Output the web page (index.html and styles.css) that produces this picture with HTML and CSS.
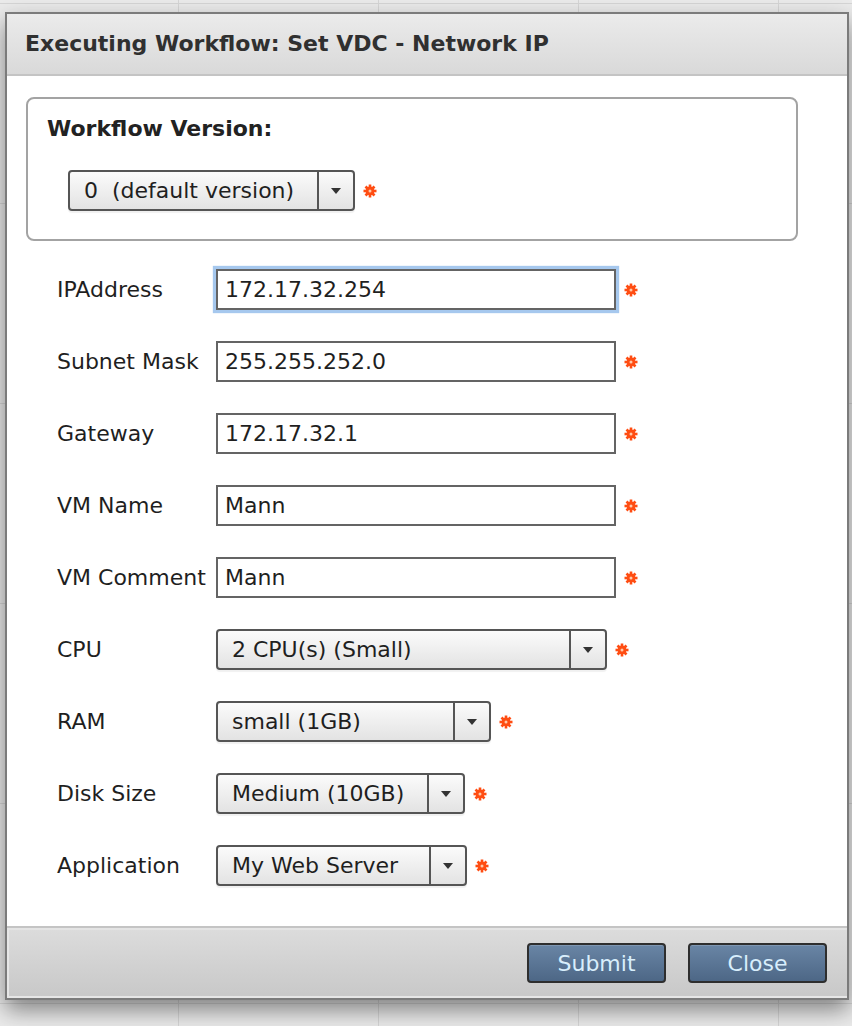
FILE: index.html
```html
<!DOCTYPE html>
<html>
<head>
<meta charset="utf-8">
<title>Executing Workflow</title>
<link rel="stylesheet" href="styles.css">
</head>
<body>
<div class="dialog">
  <div class="titlebar">Executing Workflow: Set VDC - Network IP</div>
  <div class="content">
    <div class="version-box">
      <div class="version-title">Workflow Version:</div>
      <div class="version-row">
        <div class="combo w-version"><span class="combo-text">0&nbsp; (default version)</span><span class="combo-btn"><span class="tri"></span></span></div>
        <svg class="req" viewBox="0 0 14 14"><g stroke="#ff4d12" stroke-width="2.6" stroke-linecap="butt"><line x1="7" y1="0.5" x2="7" y2="13.5"/><line x1="0.5" y1="7" x2="13.5" y2="7"/><line x1="2.5" y1="2.5" x2="11.5" y2="11.5"/><line x1="11.5" y1="2.5" x2="2.5" y2="11.5"/></g><circle cx="7" cy="7" r="4.4" fill="#ff4d12"/><circle cx="7" cy="7" r="1.5" fill="#ffc9a8"/></svg>
      </div>
    </div>
    <div class="form">
      <div class="label">IPAddress</div>
      <div class="field"><input class="text focused" type="text" value="172.17.32.254"><svg class="req" viewBox="0 0 14 14"><g stroke="#ff4d12" stroke-width="2.6" stroke-linecap="butt"><line x1="7" y1="0.5" x2="7" y2="13.5"/><line x1="0.5" y1="7" x2="13.5" y2="7"/><line x1="2.5" y1="2.5" x2="11.5" y2="11.5"/><line x1="11.5" y1="2.5" x2="2.5" y2="11.5"/></g><circle cx="7" cy="7" r="4.4" fill="#ff4d12"/><circle cx="7" cy="7" r="1.5" fill="#ffc9a8"/></svg></div>

      <div class="label">Subnet Mask</div>
      <div class="field"><input class="text" type="text" value="255.255.252.0"><svg class="req" viewBox="0 0 14 14"><g stroke="#ff4d12" stroke-width="2.6" stroke-linecap="butt"><line x1="7" y1="0.5" x2="7" y2="13.5"/><line x1="0.5" y1="7" x2="13.5" y2="7"/><line x1="2.5" y1="2.5" x2="11.5" y2="11.5"/><line x1="11.5" y1="2.5" x2="2.5" y2="11.5"/></g><circle cx="7" cy="7" r="4.4" fill="#ff4d12"/><circle cx="7" cy="7" r="1.5" fill="#ffc9a8"/></svg></div>

      <div class="label">Gateway</div>
      <div class="field"><input class="text" type="text" value="172.17.32.1"><svg class="req" viewBox="0 0 14 14"><g stroke="#ff4d12" stroke-width="2.6" stroke-linecap="butt"><line x1="7" y1="0.5" x2="7" y2="13.5"/><line x1="0.5" y1="7" x2="13.5" y2="7"/><line x1="2.5" y1="2.5" x2="11.5" y2="11.5"/><line x1="11.5" y1="2.5" x2="2.5" y2="11.5"/></g><circle cx="7" cy="7" r="4.4" fill="#ff4d12"/><circle cx="7" cy="7" r="1.5" fill="#ffc9a8"/></svg></div>

      <div class="label">VM Name</div>
      <div class="field"><input class="text" type="text" value="Mann"><svg class="req" viewBox="0 0 14 14"><g stroke="#ff4d12" stroke-width="2.6" stroke-linecap="butt"><line x1="7" y1="0.5" x2="7" y2="13.5"/><line x1="0.5" y1="7" x2="13.5" y2="7"/><line x1="2.5" y1="2.5" x2="11.5" y2="11.5"/><line x1="11.5" y1="2.5" x2="2.5" y2="11.5"/></g><circle cx="7" cy="7" r="4.4" fill="#ff4d12"/><circle cx="7" cy="7" r="1.5" fill="#ffc9a8"/></svg></div>

      <div class="label">VM Comment</div>
      <div class="field"><input class="text" type="text" value="Mann"><svg class="req" viewBox="0 0 14 14"><g stroke="#ff4d12" stroke-width="2.6" stroke-linecap="butt"><line x1="7" y1="0.5" x2="7" y2="13.5"/><line x1="0.5" y1="7" x2="13.5" y2="7"/><line x1="2.5" y1="2.5" x2="11.5" y2="11.5"/><line x1="11.5" y1="2.5" x2="2.5" y2="11.5"/></g><circle cx="7" cy="7" r="4.4" fill="#ff4d12"/><circle cx="7" cy="7" r="1.5" fill="#ffc9a8"/></svg></div>

      <div class="label">CPU</div>
      <div class="field"><div class="combo w-cpu"><span class="combo-text">2 CPU(s) (Small)</span><span class="combo-btn"><span class="tri"></span></span></div><svg class="req" viewBox="0 0 14 14"><g stroke="#ff4d12" stroke-width="2.6" stroke-linecap="butt"><line x1="7" y1="0.5" x2="7" y2="13.5"/><line x1="0.5" y1="7" x2="13.5" y2="7"/><line x1="2.5" y1="2.5" x2="11.5" y2="11.5"/><line x1="11.5" y1="2.5" x2="2.5" y2="11.5"/></g><circle cx="7" cy="7" r="4.4" fill="#ff4d12"/><circle cx="7" cy="7" r="1.5" fill="#ffc9a8"/></svg></div>

      <div class="label">RAM</div>
      <div class="field"><div class="combo w-ram"><span class="combo-text">small (1GB)</span><span class="combo-btn"><span class="tri"></span></span></div><svg class="req" viewBox="0 0 14 14"><g stroke="#ff4d12" stroke-width="2.6" stroke-linecap="butt"><line x1="7" y1="0.5" x2="7" y2="13.5"/><line x1="0.5" y1="7" x2="13.5" y2="7"/><line x1="2.5" y1="2.5" x2="11.5" y2="11.5"/><line x1="11.5" y1="2.5" x2="2.5" y2="11.5"/></g><circle cx="7" cy="7" r="4.4" fill="#ff4d12"/><circle cx="7" cy="7" r="1.5" fill="#ffc9a8"/></svg></div>

      <div class="label">Disk Size</div>
      <div class="field"><div class="combo w-disk"><span class="combo-text">Medium (10GB)</span><span class="combo-btn"><span class="tri"></span></span></div><svg class="req" viewBox="0 0 14 14"><g stroke="#ff4d12" stroke-width="2.6" stroke-linecap="butt"><line x1="7" y1="0.5" x2="7" y2="13.5"/><line x1="0.5" y1="7" x2="13.5" y2="7"/><line x1="2.5" y1="2.5" x2="11.5" y2="11.5"/><line x1="11.5" y1="2.5" x2="2.5" y2="11.5"/></g><circle cx="7" cy="7" r="4.4" fill="#ff4d12"/><circle cx="7" cy="7" r="1.5" fill="#ffc9a8"/></svg></div>

      <div class="label">Application</div>
      <div class="field"><div class="combo w-app"><span class="combo-text">My Web Server</span><span class="combo-btn"><span class="tri"></span></span></div><svg class="req" viewBox="0 0 14 14"><g stroke="#ff4d12" stroke-width="2.6" stroke-linecap="butt"><line x1="7" y1="0.5" x2="7" y2="13.5"/><line x1="0.5" y1="7" x2="13.5" y2="7"/><line x1="2.5" y1="2.5" x2="11.5" y2="11.5"/><line x1="11.5" y1="2.5" x2="2.5" y2="11.5"/></g><circle cx="7" cy="7" r="4.4" fill="#ff4d12"/><circle cx="7" cy="7" r="1.5" fill="#ffc9a8"/></svg></div>
    </div>
  </div>
  <div class="footer">
    <button class="btn" type="button">Submit</button>
    <button class="btn" type="button">Close</button>
  </div>
</div>
</body>
</html>
```

FILE: styles.css
```css
html, body {
  margin: 0;
  padding: 0;
}
body {
  width: 852px;
  height: 1026px;
  overflow: hidden;
  background-color: #ebebeb;
  background-image:
    linear-gradient(90deg, #d6d6d6 1px, transparent 1px),
    linear-gradient(180deg, #d6d6d6 1px, transparent 1px);
  background-size: 200px 200px, 200px 200px;
  background-position: 178px 0, 0 3px;
  font-family: "DejaVu Sans", Verdana, sans-serif;
  font-size: 22px;
  color: #222;
}
.dialog {
  box-sizing: border-box;
  width: 844px;
  margin: 12px 0 0 5px;
  border: 2px solid #7b7b7b;
  background: #fff;
  box-shadow: 0 10px 22px rgba(0, 0, 0, 0.45);
}
.titlebar {
  height: 60px;
  line-height: 60px;
  padding-left: 18px;
  font-weight: bold;
  font-size: 22px;
  color: #303030;
  background: linear-gradient(#ebebeb, #d9d9d9);
  border-bottom: 2px solid #c4c4c4;
}
.content {
  padding: 21px 49px 40px 19px;
  background: #fff;
}
.version-box {
  box-sizing: border-box;
  height: 144px;
  border: 2px solid #a3a3a3;
  border-radius: 8px;
  padding: 17px 19px 0 19px;
}
.version-title {
  font-weight: bold;
  line-height: 26px;
  color: #222;
}
.version-row {
  display: flex;
  align-items: center;
  gap: 8px;
  margin-top: 28px;
  margin-left: 21px;
}
.form {
  display: grid;
  grid-template-columns: 159px auto;
  grid-auto-rows: 41px;
  row-gap: 31px;
  margin: 28px 0 0 31px;
}
.label {
  display: flex;
  align-items: center;
  color: #1f1f1f;
  white-space: nowrap;
}
.field {
  display: flex;
  align-items: center;
  gap: 8px;
}
.text {
  box-sizing: border-box;
  width: 400px;
  height: 41px;
  margin: 0;
  padding: 0 7px;
  border: 2px solid #646464;
  border-radius: 0;
  background: #fff;
  font-family: "DejaVu Sans", Verdana, sans-serif;
  font-size: 22px;
  color: #1f1f1f;
  outline: none;
}
.text.focused {
  box-shadow: 0 0 1px 3px #a6c8ee;
}
.combo {
  box-sizing: border-box;
  display: flex;
  height: 41px;
  border: 2px solid #555;
  border-radius: 4px;
  background: linear-gradient(#fbfbfb, #e3e3e3);
  box-shadow: 0 2px 1px rgba(0, 0, 0, 0.06);
}
.w-version { width: 287px; }
.w-cpu { width: 391px; }
.w-ram { width: 275px; }
.w-disk { width: 249px; }
.w-app { width: 251px; }
.combo-text {
  flex: 1;
  padding-left: 14px;
  line-height: 37px;
  color: #1f1f1f;
  white-space: nowrap;
}
.combo-btn {
  width: 34px;
  border-left: 2px solid #555;
  display: flex;
  align-items: center;
  justify-content: center;
}
.tri {
  width: 0;
  height: 0;
  margin-top: 1px;
  border-left: 5px solid transparent;
  border-right: 5px solid transparent;
  border-top: 6px solid #333;
}
.req {
  width: 14px;
  height: 14px;
  flex: none;
}
.footer {
  height: 70px;
  display: flex;
  align-items: center;
  justify-content: flex-end;
  gap: 22px;
  padding-right: 20px;
  border-top: 2px solid #c4c4c4;
  background: linear-gradient(#dcdcdc, #c8c8c8);
  box-shadow: inset 2px 0 0 #e6e6e6, inset 0 -2px 0 #e6e6e6, inset 0 2px 0 #e4e4e4;
}
.btn {
  box-sizing: border-box;
  width: 139px;
  height: 40px;
  margin: 0;
  padding: 0;
  border: 2px solid #2e2e2e;
  border-radius: 4px;
  background: linear-gradient(#6985a5, #4d6786);
  box-shadow: inset 0 1px 0 rgba(255, 255, 255, 0.15);
  font-family: "DejaVu Sans", Verdana, sans-serif;
  font-size: 22px;
  color: #d8eefc;
}
```
